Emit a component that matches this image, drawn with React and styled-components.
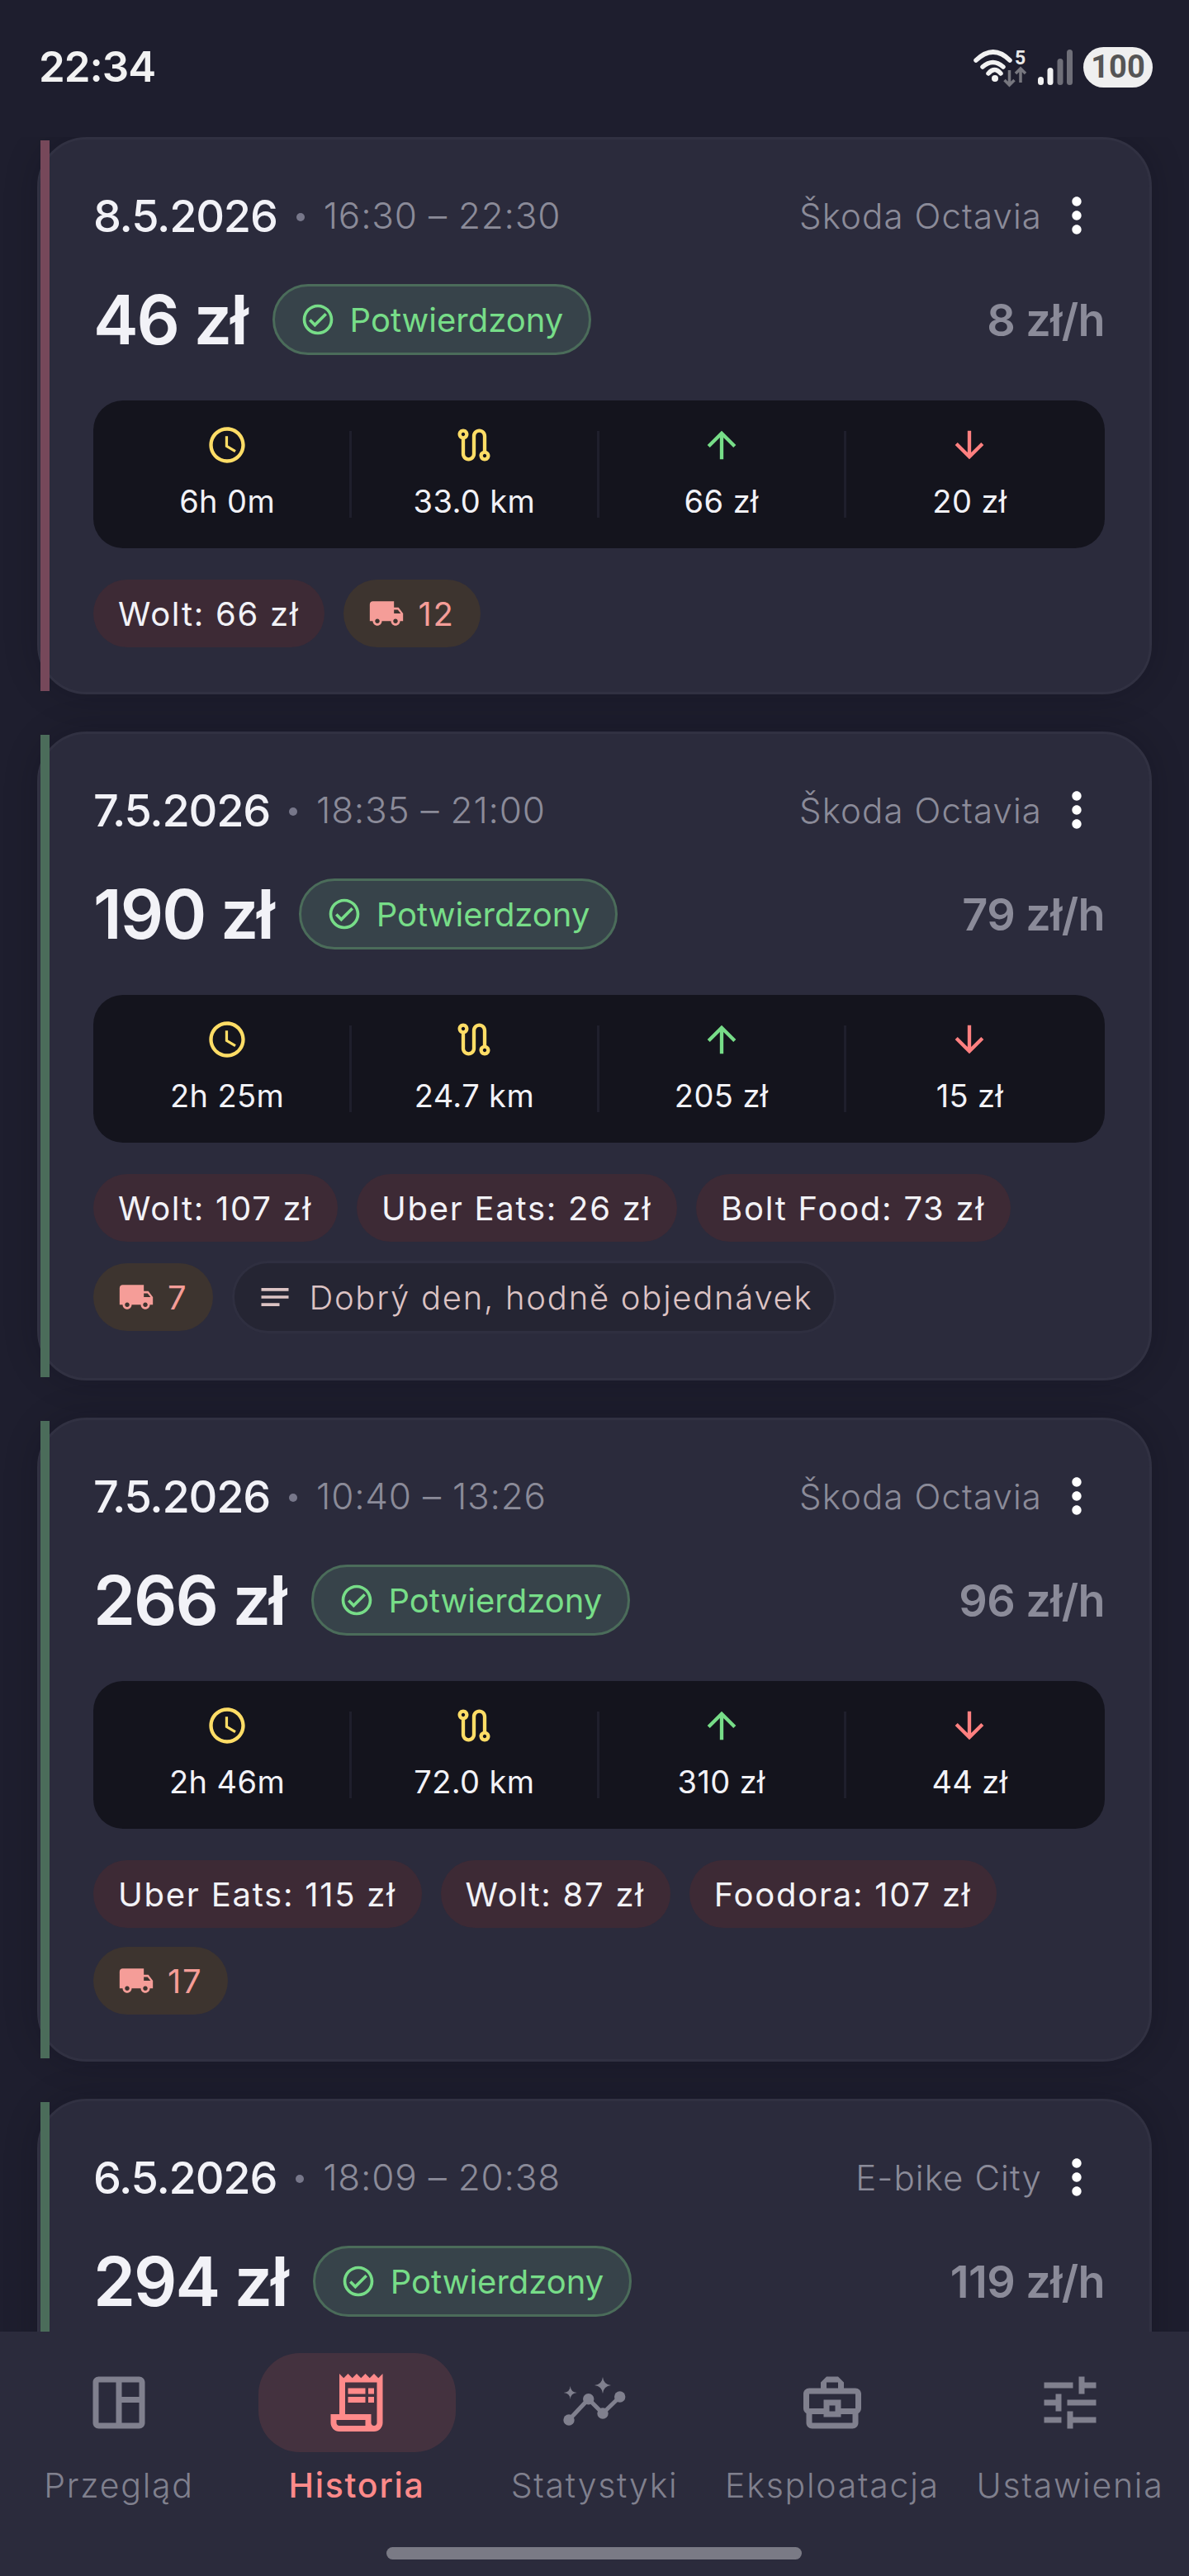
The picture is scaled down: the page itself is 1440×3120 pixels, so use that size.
import React from 'react';
import styled, {createGlobalStyle} from 'styled-components';
import {
    MdArrowDownward,
    MdArrowUpward,
    MdOutlineBusinessCenter,
    MdOutlineCheckCircle,
    MdLocalShipping,
    MdMoreVert,
    MdNotes,
    MdOutlineReceiptLong,
    MdOutlineRoute,
    MdOutlineSchedule,
    MdOutlineSpaceDashboard,
    MdOutlineTune,
} from 'react-icons/md';

const GlobalStyle = createGlobalStyle`
  html, body {
    margin: 0;
    padding: 0;
    background: #1e1e2e;
  }
  * {
    box-sizing: border-box;
  }
`;

const Screen = styled.div`
  width: 1440px;
  height: 3120px;
  display: flex;
  flex-direction: column;
  overflow: hidden;
  background: #1e1e2e;
  font-family: Inter, "Noto Sans", sans-serif;
  color: #f2f2f7;
`;

const StatusBar = styled.div`
  height: 166px;
  flex: none;
  display: flex;
  justify-content: space-between;
  align-items: flex-start;
  padding: 50px 44px 0 47px;
`;

const Clock = styled.span`
  font-size: 51px;
  line-height: 62px;
  font-weight: 600;
  letter-spacing: -1px;
  color: #f2f2f2;
`;

const StatusIcons = styled.div`
  display: flex;
  align-items: center;
  gap: 13px;
  margin-top: 6px;
`;

const Battery = styled.span`
  width: 84px;
  height: 49px;
  border-radius: 25px;
  background: #efefef;
  color: #555;
  font-family: Roboto, sans-serif;
  font-size: 38px;
  font-weight: 700;
  line-height: 49px;
  text-align: center;
`;

const CardList = styled.div`
  flex: 1;
  min-height: 0;
  overflow: hidden;
  display: flex;
  flex-direction: column;
  gap: 45px;
  padding: 0 45px;
`;

const Card = styled.article`
  position: relative;
  flex: none;
  background: #2b2b3c;
  border: 3px solid #313142;
  border-radius: 60px;
  padding: 52px 54px 54px 65px;
  box-shadow: 0 0 40px rgba(10, 10, 20, 0.22);

  &:last-child {
    min-height: 780px;
  }
`;

const StatusStripe = styled.span`
  position: absolute;
  left: 1px;
  top: 1px;
  bottom: 1px;
  width: 11px;
  background: ${p => (p.$kind === 'bad' ? '#76485a' : '#4b6c5a')};
`;

const HeaderRow = styled.div`
  height: 80px;
  display: flex;
  align-items: center;
`;

const DateText = styled.span`
  font-size: 54px;
  font-weight: 500;
  letter-spacing: -1.2px;
`;

const Dot = styled.span`
  width: 10px;
  height: 10px;
  border-radius: 50%;
  background: #77778a;
  margin: 4px 23px 0 23px;
`;

const TimeText = styled.span`
  font-size: 44px;
  font-weight: 300;
  letter-spacing: 0.8px;
  color: #8b8b99;
`;

const Vehicle = styled.span`
  margin-left: auto;
  font-size: 42px;
  font-weight: 300;
  letter-spacing: 1.1px;
  color: #8b8b99;
`;

const MoreButton = styled.span`
  display: flex;
  margin-left: 8px;
  color: #fff;
  font-size: 68px;
`;

const AmountRow = styled.div`
  height: 86px;
  margin-top: 43px;
  display: flex;
  align-items: center;
`;

const Amount = styled.span`
  font-size: 82px;
  font-weight: 600;
  letter-spacing: -2px;
  margin-right: 31px;
`;

const Badge = styled.span`
  height: 86px;
  display: inline-flex;
  align-items: center;
  gap: 17px;
  padding: 0 31px 0 30px;
  border: 3px solid #4b6c5a;
  border-radius: 43px;
  background: #37434a;
  color: #77dd88;
  font-size: 40px;
  font-weight: 400;
`;

const Rate = styled.span`
  margin-left: auto;
  font-size: 54px;
  font-weight: 600;
  letter-spacing: -0.6px;
  color: #8b8b99;
`;

const StatsPanel = styled.div`
  height: 179px;
  margin-top: 55px;
  padding: 0 14px;
  border-radius: 36px;
  background: #14141d;
  display: grid;
  grid-template-columns: repeat(4, 1fr);
  align-items: center;
`;

const StatCell = styled.div`
  height: 105px;
  display: flex;
  flex-direction: column;
  align-items: center;
  justify-content: space-between;
  border-right: 3px solid #1f1f2c;

  &:last-child {
    border-right: 0;
  }
`;

const StatIcon = styled.span`
  display: flex;
  margin-top: -9px;
  font-size: 52px;
  color: ${p => p.$color};
`;

const StatValue = styled.span`
  font-size: 38px;
  line-height: 46px;
  font-weight: 400;
  letter-spacing: 0.4px;
  margin-bottom: -3px;
`;

const ChipWrap = styled.div`
  margin-top: 38px;
  display: flex;
  flex-wrap: wrap;
  align-items: center;
  gap: 23px;
`;

const Chip = styled.span`
  height: 82px;
  display: inline-flex;
  align-items: center;
  gap: 16px;
  padding: 0 31px 0 30px;
  border-radius: 41px;
  font-size: 40px;
  font-weight: 400;
  letter-spacing: 1.75px;
  background: ${p => p.$bg};
  color: ${p => p.$color};
`;

const NoteChip = styled(Chip)`
  height: 88px;
  border-radius: 44px;
  font-weight: 300;
  gap: 19px;
  padding: 0 26px 0 27px;
  border: 3px solid #2f2f40;
`;

const ChipIcon = styled.span`
  display: flex;
  font-size: 44px;
`;

const BottomNav = styled.nav`
  position: relative;
  height: 296px;
  flex: none;
  background: #2b2b3c;
  padding-top: 26px;
`;

const NavItems = styled.div`
  display: grid;
  grid-template-columns: repeat(5, 288px);
`;

const NavItem = styled.div`
  display: flex;
  flex-direction: column;
  align-items: center;
`;

const NavIcon = styled.span`
  width: 239px;
  height: 120px;
  border-radius: 50px;
  display: flex;
  align-items: center;
  justify-content: center;
  font-size: 84px;
  background: ${p => (p.$active ? '#44323f' : 'transparent')};
  color: ${p => (p.$active ? '#ff8a8a' : '#80808e')};
`;

const NavLabel = styled.span`
  margin-top: 15px;
  font-size: 41px;
  line-height: 50px;
  letter-spacing: 1.75px;
  white-space: nowrap;
  font-weight: ${p => (p.$active ? 500 : 300)};
  color: ${p => (p.$active ? '#ff8a8a' : '#80808e')};
`;

const HomeIndicator = styled.div`
  position: absolute;
  left: 468px;
  bottom: 20px;
  width: 503px;
  height: 15px;
  border-radius: 8px;
  background: #7a7a85;
`;

const shifts = [
    {
        id: 1, kind: 'bad', date: '8.5.2026', time: '16:30 – 22:30', vehicle: 'Škoda Octavia',
        amount: '46 zł', rate: '8 zł/h',
        stats: ['6h 0m', '33.0 km', '66 zł', '20 zł'],
        apps: ['Wolt: 66 zł'], orders: 12,
    },
    {
        id: 2, kind: 'good', date: '7.5.2026', time: '18:35 – 21:00', vehicle: 'Škoda Octavia',
        amount: '190 zł', rate: '79 zł/h',
        stats: ['2h 25m', '24.7 km', '205 zł', '15 zł'],
        apps: ['Wolt: 107 zł', 'Uber Eats: 26 zł', 'Bolt Food: 73 zł'], orders: 7,
        note: 'Dobrý den, hodně objednávek',
    },
    {
        id: 3, kind: 'good', date: '7.5.2026', time: '10:40 – 13:26', vehicle: 'Škoda Octavia',
        amount: '266 zł', rate: '96 zł/h',
        stats: ['2h 46m', '72.0 km', '310 zł', '44 zł'],
        apps: ['Uber Eats: 115 zł', 'Wolt: 87 zł', 'Foodora: 107 zł'], orders: 17,
    },
    {
        id: 4, kind: 'good', date: '6.5.2026', time: '18:09 – 20:38', vehicle: 'E-bike City',
        amount: '294 zł', rate: '119 zł/h',
    },
];

const statIcons = [
    {Icon: MdOutlineSchedule, color: '#ffdd66'},
    {Icon: MdOutlineRoute, color: '#ffdd66'},
    {Icon: MdArrowUpward, color: '#77dd88'},
    {Icon: MdArrowDownward, color: '#ff8080'},
];

// the app's own chart icon, no package has this one
const SparkleChartIcon = () => (
    <svg width="1em" height="1em" viewBox="0 0 84 84" fill="currentColor">
        <path d="M52 11 Q53 20 62 21 Q53 22 52 31 Q51 22 42 21 Q51 20 52 11Z"/>
        <path d="M12.7 22 Q13.2 29.5 20.7 30 Q13.2 30.5 12.7 38 Q12.2 30.5 4.7 30 Q12.2 29.5 12.7 22Z"/>
        <path d="M11 63 L34.7 37.7 L52 55 L72.7 35" fill="none" stroke="currentColor" strokeWidth="5"/>
        <circle cx="11" cy="63" r="6.7"/>
        <circle cx="34.7" cy="37.7" r="6.7"/>
        <circle cx="52" cy="55" r="6.7"/>
        <circle cx="72.7" cy="35" r="6.7"/>
    </svg>
);

const navItems = [
    {label: 'Przegląd', Icon: MdOutlineSpaceDashboard},
    {label: 'Historia', Icon: MdOutlineReceiptLong, active: true},
    {label: 'Statystyki', Icon: SparkleChartIcon},
    {label: 'Eksploatacja', Icon: MdOutlineBusinessCenter},
    {label: 'Ustawienia', Icon: MdOutlineTune},
];

const WifiIcon = () => (
    <svg width="66" height="50" viewBox="0 0 66 50" fill="none">
        <g stroke="#f2f2f2" strokeWidth="5.5" strokeLinecap="round">
            <path d="M4 17 Q25 -3 45 17"/>
            <path d="M12 25 Q24.5 14 37 25"/>
            <path d="M19 33 Q26.5 24 34 33"/>
        </g>
        <circle cx="27" cy="39" r="4" fill="#f2f2f2"/>
        <text x="51" y="22" fontFamily="Roboto, sans-serif" fontSize="23" fontWeight="700" fill="#e8e8e8">5</text>
        <g stroke="#77777f" strokeWidth="3.5">
            <path d="M44.5 29 V47 M38.5 41 L44.5 47 L50.5 41"/>
            <path d="M58 44 V27 M52 33 L58 27 L64 33"/>
        </g>
    </svg>
);

const SignalIcon = () => (
    <svg width="42" height="43" viewBox="0 0 42 43" fill="none" strokeWidth="7" strokeLinecap="round">
        <path d="M3.5 36.5 V39.5" stroke="#f2f2f2"/>
        <path d="M15 25.5 V39.5" stroke="#f2f2f2"/>
        <path d="M27 14.5 V39.5" stroke="#6f6f78"/>
        <path d="M38.5 3.5 V39.5" stroke="#6f6f78"/>
    </svg>
);

const ShiftCard = ({shift}) => (
    <Card>
        <StatusStripe $kind={shift.kind}/>
        <HeaderRow>
            <DateText>{shift.date}</DateText>
            <Dot/>
            <TimeText>{shift.time}</TimeText>
            <Vehicle>{shift.vehicle}</Vehicle>
            <MoreButton><MdMoreVert/></MoreButton>
        </HeaderRow>
        <AmountRow>
            <Amount>{shift.amount}</Amount>
            <Badge>
                <ChipIcon><MdOutlineCheckCircle/></ChipIcon>
                Potwierdzony
            </Badge>
            <Rate>{shift.rate}</Rate>
        </AmountRow>
        {shift.stats && (
            <StatsPanel>
                {shift.stats.map((value, i) => {
                    const {Icon, color} = statIcons[i];
                    return (
                        <StatCell key={value}>
                            <StatIcon $color={color}><Icon/></StatIcon>
                            <StatValue>{value}</StatValue>
                        </StatCell>
                    );
                })}
            </StatsPanel>
        )}
        {shift.apps && (
            <ChipWrap>
                {shift.apps.map(app => (
                    <Chip key={app} $bg="#3d2a35" $color="#f2f2f7">{app}</Chip>
                ))}
                <Chip $bg="#3d342f" $color="#f59d98">
                    <ChipIcon><MdLocalShipping/></ChipIcon>
                    {shift.orders}
                </Chip>
                {shift.note && (
                    <NoteChip $bg="#252533" $color="#dcc3c4">
                        <ChipIcon><MdNotes/></ChipIcon>
                        {shift.note}
                    </NoteChip>
                )}
            </ChipWrap>
        )}
    </Card>
);

const App = () => {
    return (
        <Screen>
            <GlobalStyle/>
            <StatusBar>
                <Clock>22:34</Clock>
                <StatusIcons>
                    <WifiIcon/>
                    <SignalIcon/>
                    <Battery>100</Battery>
                </StatusIcons>
            </StatusBar>
            <CardList>
                {shifts.map(shift => <ShiftCard key={shift.id} shift={shift}/>)}
            </CardList>
            <BottomNav>
                <NavItems>
                    {navItems.map(({label, Icon, active}) => (
                        <NavItem key={label}>
                            <NavIcon $active={active}><Icon/></NavIcon>
                            <NavLabel $active={active}>{label}</NavLabel>
                        </NavItem>
                    ))}
                </NavItems>
                <HomeIndicator/>
            </BottomNav>
        </Screen>
    );
};

export default App;
